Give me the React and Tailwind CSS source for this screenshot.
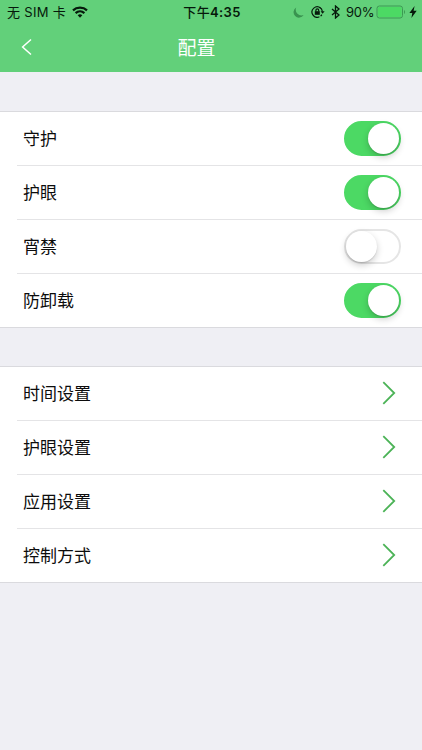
import { useState } from 'react';

const SWITCHES = [
  { id: 'guard', label: '守护', on: true },
  { id: 'eye', label: '护眼', on: true },
  { id: 'curfew', label: '宵禁', on: false },
  { id: 'uninstall', label: '防卸载', on: true },
];

const LINKS = ['时间设置', '护眼设置', '应用设置', '控制方式'];

function StatusBar() {
  return (
    <div className="grid h-6 grid-cols-[1fr_auto_1fr] items-center pl-[7px] pr-[5px] text-[13px] leading-6 text-[#06190b]">
      <div className="flex items-center">
        <span className="w-[59px] whitespace-nowrap tracking-[0.3px]">无 SIM 卡</span>
        <svg className="ml-[6px]" width="16" height="12" viewBox="0 0 16 12" fill="none" stroke="currentColor" strokeWidth="2.2">
          <path d="M1 4.4C4.8.8 11.2.8 15 4.4" />
          <path d="M3.6 7.1c2.5-2.3 6.3-2.3 8.8 0" />
          <path d="M5.7 9.2c1.3-1.2 3.3-1.2 4.6 0L8 11.7z" fill="currentColor" stroke="none" />
        </svg>
      </div>

      <span className="whitespace-nowrap font-medium tracking-[0.35px]">
        下午<span className="font-semibold">4:35</span>
      </span>

      <div className="flex items-center justify-end">
        <svg className="mr-[7px]" width="11" height="11" viewBox="0 0 11 11" fill="#399350">
          <path d="M3.2.6A5.4 5.4 0 1 0 10.6 8 5.7 5.7 0 0 1 3.2.6z" />
        </svg>
        <svg className="mr-[6px]" width="14" height="12" viewBox="0 0 14 12" fill="none" stroke="currentColor" strokeWidth="1.2">
          <path d="M9.6 2.1A5.2 5.2 0 1 0 8.4 10.8" />
          <path d="M8.4 1.3a5.2 5.2 0 0 1 3 4.2" />
          <path d="M9.6 10.1a5.2 5.2 0 0 0 1.2-1.5" />
          <path d="M9.6 5.2h4l-2 2.6z" fill="currentColor" stroke="none" />
          <rect x="3.8" y="5.2" width="5" height="3.6" fill="currentColor" stroke="none" />
          <path d="M4.9 5.4V4.3a1.4 1.4 0 0 1 2.8 0v1.1" />
        </svg>
        <svg className="mr-[6px]" width="9" height="14" viewBox="0 0 9 14" fill="none" stroke="currentColor" strokeWidth="1.3">
          <path d="M1 4l7 6-3.5 3V1L8 4l-7 6" />
        </svg>
        <span className="mr-[3px] w-[27px] whitespace-nowrap tracking-[-0.3px]">90%</span>
        <svg className="mr-[3px]" width="30" height="14" viewBox="0 0 30 14" fill="none">
          <rect x="1" y="1" width="25.5" height="12" rx="2.4" stroke="#3b9a52" />
          <rect x="2" y="2" width="23.5" height="10" rx="1.2" fill="#4cd964" />
          <path d="M28 5v4c1.4-.6 1.4-3.4 0-4z" fill="#3b9a52" />
        </svg>
        <svg width="8" height="12" viewBox="0 0 8 12" fill="currentColor">
          <path d="M5.6 0L.4 6.9h2.9L2.4 12l5.3-7.2H4.6z" />
        </svg>
      </div>
    </div>
  );
}

function Toggle({ on, onClick }) {
  return (
    <button
      onClick={onClick}
      className={`flex h-[35px] w-[57px] items-center rounded-full border-2 ${
        on ? 'justify-end border-[#4cd964] bg-[#4cd964]' : 'justify-start border-[#e5e5e5] bg-white'
      }`}
    >
      <span className="h-[31px] w-[31px] rounded-full bg-white shadow-[0_3px_7px_rgba(0,0,0,0.2),0_1px_1px_rgba(0,0,0,0.12)]" />
    </button>
  );
}

function Row({ label, last, children }) {
  return (
    <div className={last ? '' : 'pl-[17px]'}>
      <div
        className={`flex h-[54px] items-center justify-between border-b pr-[21px] ${
          last ? 'border-[#dadade] pl-[23px]' : 'border-[#e4e4e6] pl-[6px]'
        }`}
      >
        <span className="pt-[2px] text-[17px] text-[#0c0c0c]">{label}</span>
        {children}
      </div>
    </div>
  );
}

export default function App() {
  const [switches, setSwitches] = useState(SWITCHES);

  const toggle = id => {
    setSwitches(switches.map(s => (s.id === id ? { ...s, on: !s.on } : s)));
  };

  return (
    <div className="flex h-[750px] w-[422px] flex-col overflow-hidden bg-[#efeff4] font-['Inter','Noto_Sans_CJK_SC',sans-serif]">
      <header className="h-[72px] bg-[#62d07a]">
        <StatusBar />
        <div className="grid h-12 grid-cols-[1fr_auto_1fr] items-center pr-[29px]">
          <svg className="-mt-[2px] ml-[21px]" width="12" height="18" viewBox="0 0 12 18" fill="none" stroke="#fff" strokeWidth="1.5">
            <path d="M10 1.5L1.6 9l8.4 7.5" />
          </svg>
          <h1 className="pt-[2px] text-[19px] text-white">配置</h1>
        </div>
      </header>

      <section className="mt-[39px] border-t border-[#dadade] bg-white">
        {switches.map((s, i) => (
          <Row key={s.id} label={s.label} last={i === switches.length - 1}>
            <Toggle on={s.on} onClick={() => toggle(s.id)} />
          </Row>
        ))}
      </section>

      <section className="mt-[38px] border-t border-[#dadade] bg-white">
        {LINKS.map((label, i) => (
          <Row key={label} label={label} last={i === LINKS.length - 1}>
            <svg className="-mt-px mr-[5px]" width="14" height="24" viewBox="0 0 14 24" fill="none" stroke="#4cb357" strokeWidth="1.8">
              <path d="M1.3 1.2L12.2 12 1.3 22.8" />
            </svg>
          </Row>
        ))}
      </section>
    </div>
  );
}
